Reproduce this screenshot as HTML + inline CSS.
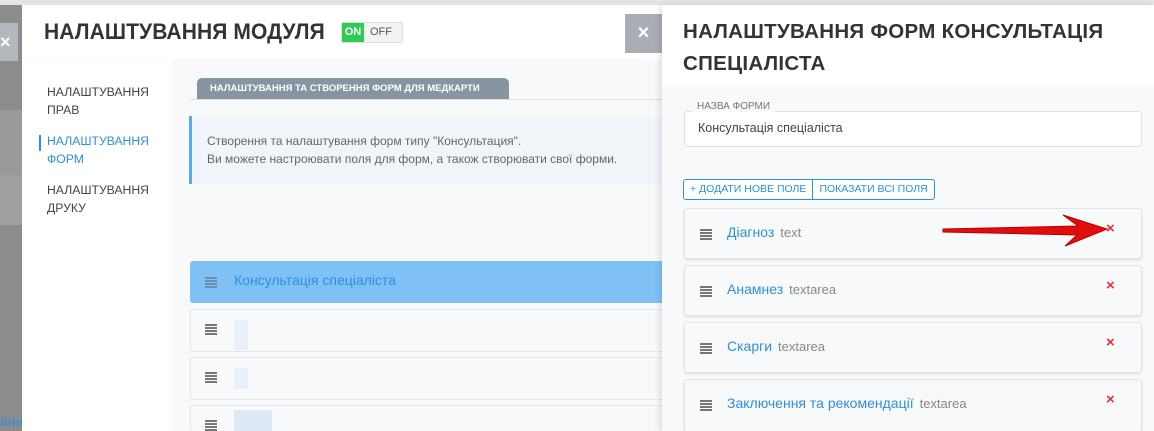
<!DOCTYPE html>
<html style="width:1154px;height:431px;overflow:hidden"><head><meta charset="utf-8"><style>
*{box-sizing:border-box;margin:0;padding:0}
body{width:1154px;height:431px;overflow:hidden;position:relative;background:#e4e4e4;font-family:"Liberation Sans",sans-serif}
.abs{position:absolute}
.grip{position:absolute;width:12px;height:11px;background:repeating-linear-gradient(#777 0 2px,transparent 2px 3px)}
.row{position:absolute;left:684px;width:458px;height:51px;background:#f8f9fa;border:1px solid #e2e4e7;border-radius:3px;box-shadow:0 1px 2px rgba(0,0,0,.12)}
.row .n{position:absolute;left:42px;top:15px;font-size:14px;color:#2d8fe0}
.row .t{color:#888;font-size:13px;margin-left:6px}
.row .x{position:absolute;left:421px;top:11px;color:#e8303a;font-size:15px;font-weight:bold}
.lrow{position:absolute;left:190px;width:480px;height:43px;background:#f8f9fa;border:1px solid #e3e5e8;border-radius:3px}
</style></head><body>
<div class="abs" style="left:0;top:5px;width:22px;height:426px;background:#8c8c8c"></div>
<div class="abs" style="left:0;top:110px;width:22px;height:65px;background:#999"></div>
<div class="abs" style="left:0;top:175px;width:22px;height:50px;background:#a0a0a0"></div>
<div class="abs" style="left:0;top:23px;width:18px;height:38px;background:#b3b8bf;color:#fff;font-size:18px;line-height:38px;font-weight:bold">×</div>
<div class="abs" style="left:0;top:413px;font-size:14px;color:#2d8fe0">анн</div>

<div class="abs" style="left:22px;top:5px;width:640px;height:426px;background:#f8f9fa"></div>
<div class="abs" style="left:22px;top:5px;width:640px;height:54px;background:#fff"></div>
<div class="abs" style="left:44px;top:19px;font-size:22px;color:#333;letter-spacing:.1px;font-weight:bold;transform:scaleX(.955);transform-origin:left">НАЛАШТУВАННЯ МОДУЛЯ</div>
<div class="abs" style="left:341px;top:22px;width:62px;height:21px;border:1px solid #ddd;border-radius:2px;background:#f3f3f3;font-size:11px;line-height:19px">
<span style="display:inline-block;width:22px;height:19px;background:#2ecc55;color:#fff;text-align:center;font-weight:bold">ON</span><span style="color:#555;margin-left:6px">OFF</span></div>
<div class="abs" style="left:625px;top:14px;width:37px;height:39px;background:#a9aeb5;color:#fff;font-size:20px;line-height:39px;text-align:center;font-weight:bold">×</div>
<div class="abs" style="left:22px;top:60px;width:150px;height:371px;background:#fff"></div>
<div class="abs" style="left:47px;top:83px;font-size:12.2px;color:#444;line-height:18px">НАЛАШТУВАННЯ<br>ПРАВ</div>
<div class="abs" style="left:39px;top:135px;width:2px;height:16px;background:#2d8fe0"></div>
<div class="abs" style="left:47px;top:132px;font-size:12.2px;color:#2d8fe0;line-height:18px">НАЛАШТУВАННЯ<br>ФОРМ</div>
<div class="abs" style="left:47px;top:181px;font-size:12.2px;color:#444;line-height:18px">НАЛАШТУВАННЯ<br>ДРУКУ</div>
<div class="abs" style="left:190px;top:99px;width:472px;height:1px;background:#ddd"></div>
<div class="abs" style="left:197px;top:78px;width:312px;height:21px;background:#8795a3;border-radius:5px 5px 0 0;color:#fff;font-size:9.5px;font-weight:bold;line-height:21px;padding-left:13px">НАЛАШТУВАННЯ ТА СТВОРЕННЯ ФОРМ ДЛЯ МЕДКАРТИ</div>
<div class="abs" style="left:189px;top:116px;width:473px;height:68px;background:#f1f5fa;border-left:3px solid #5aa9ef"></div>
<div class="abs" style="left:207px;top:132px;font-size:12px;color:#666;line-height:18px">Створення та налаштування форм типу "Консультация".<br>Ви можете настроювати поля для форм, а також створювати свої форми.</div>
<div class="abs" style="left:190px;top:261px;width:480px;height:42px;background:#80c1f5;border-radius:3px"></div>
<div class="grip" style="left:205px;top:277px;background:repeating-linear-gradient(#6a8fb0 0 2px,transparent 2px 3px)"></div>
<div class="abs" style="left:234px;top:272px;font-size:14px;color:#2d8fe0">Консультація спеціаліста</div>
<div class="lrow" style="top:309px"></div><div class="grip" style="left:205px;top:324px"></div><div class="abs" style="left:234px;top:320px;width:14px;height:30px;background:#e8f0fa"></div>
<div class="lrow" style="top:357px"></div><div class="grip" style="left:205px;top:372px"></div><div class="abs" style="left:234px;top:368px;width:14px;height:21px;background:#e8f0fa"></div>
<div class="lrow" style="top:405px;height:26px;border-bottom:none"></div><div class="grip" style="left:205px;top:420px"></div><div class="abs" style="left:234px;top:410px;width:38px;height:21px;background:#dde9f7"></div>

<div class="abs" style="left:662px;top:5px;width:492px;height:426px;background:#f8f9fa;box-shadow:-3px 0 6px rgba(0,0,0,.1)"></div>
<div class="abs" style="left:662px;top:5px;width:492px;height:82px;background:#fff"></div>
<div class="abs" style="left:683px;top:16px;font-size:20.5px;font-weight:bold;color:#333;line-height:32px;letter-spacing:.3px">НАЛАШТУВАННЯ ФОРМ КОНСУЛЬТАЦІЯ<br>СПЕЦІАЛІСТА</div>
<div class="abs" style="left:684px;top:111px;width:458px;height:36px;background:#fff;border:1px solid #dfe2e5;border-radius:3px"></div>
<div class="abs" style="left:692px;top:101px;padding:0 5px;background:#f8f9fa;font-size:10px;color:#777">НАЗВА ФОРМИ</div>
<div class="abs" style="left:698px;top:121px;font-size:12.5px;color:#444">Консультація спеціаліста</div>
<div class="abs" style="left:683px;top:179px;height:21px;border:1px solid #2d8fe0;border-radius:3px;display:flex;font-size:10.5px;color:#2d8fe0;line-height:19px;background:#fff">
<span style="padding:0 6px;border-right:1px solid #2d8fe0">+ ДОДАТИ НОВЕ ПОЛЕ</span><span style="padding:0 6px">ПОКАЗАТИ ВСІ ПОЛЯ</span></div>
<div class="row" style="top:208px"><div class="grip" style="left:15px;top:20px"></div><div class="n">Діагноз<span class="t">text</span></div><div class="x">×</div></div>
<div class="row" style="top:265px"><div class="grip" style="left:15px;top:20px"></div><div class="n">Анамнез<span class="t">textarea</span></div><div class="x">×</div></div>
<div class="row" style="top:322px"><div class="grip" style="left:15px;top:20px"></div><div class="n">Скарги<span class="t">textarea</span></div><div class="x">×</div></div>
<div class="row" style="top:379px;height:52px;border-bottom:none"><div class="grip" style="left:15px;top:20px"></div><div class="n">Заключення та рекомендації<span class="t">textarea</span></div><div class="x">×</div></div>
<svg class="abs" style="left:940px;top:210px" width="170" height="40"><path d="M3 19 L138 16 L123 5 L167 19 L125 36 L137 25 L3 22 Z" fill="#e00d0d" stroke="#b00" stroke-width="1"/></svg>
</body></html>
